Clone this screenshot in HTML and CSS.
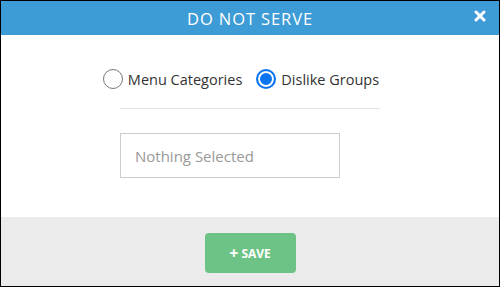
FILE: index.html
```html
<!DOCTYPE html>
<html lang="en">
<head>
    <meta charset="UTF-8">
    <title>Do Not Serve</title>
    <link rel="stylesheet" href="styles.css">
</head>
<body>
    <div class="modal">
        <div class="modal-header">
            <h2>Do Not Serve</h2>
            <span class="close-btn">
                <svg width="12" height="12" viewBox="0 0 12 12">
                    <path d="M2 2 L10 10 M10 2 L2 10" stroke="white" stroke-width="3" stroke-linecap="round"/>
                </svg>
            </span>
        </div>

        <div class="modal-body">
            <div class="radio-row">
                <label class="radio-option">
                    <input type="radio" name="source" value="menu"> Menu Categories
                </label>
                <label class="radio-option">
                    <input type="radio" name="source" value="dislike" checked> Dislike Groups
                </label>
            </div>
            <hr class="divider">
            <div class="select-box">Nothing Selected</div>
        </div>

        <div class="modal-footer">
            <button type="button" class="save-btn"><span class="plus">+</span> SAVE</button>
        </div>
    </div>
</body>
</html>
```

FILE: styles.css
```css
* {
    box-sizing: border-box;
}

body {
    margin: 0;
    font-family: 'Open Sans', sans-serif;
    background: white;
}

.modal {
    width: 500px;
    height: 287px;
    border: 1px solid #000;
    display: flex;
    flex-direction: column;
    background: white;
}

.modal-header {
    position: relative;
    height: 34px;
    background: #3d9bd6;
    display: flex;
    align-items: center;
    justify-content: center;
}

.modal-header h2 {
    margin: 0;
    color: white;
    font-size: 16.5px;
    font-weight: 400;
    letter-spacing: 0.9px;
    text-transform: uppercase;
}

.close-btn {
    position: absolute;
    right: 13px;
    top: 9px;
    display: flex;
}

.modal-body {
    flex: 1;
    padding-top: 34px;
    display: flex;
    flex-direction: column;
    align-items: center;
}

.radio-row {
    display: flex;
    gap: 14px;
    margin-right: 18px;
    font-size: 14.5px;
    color: #333;
}

.radio-option {
    display: flex;
    align-items: center;
    gap: 5px;
}

.radio-option input {
    appearance: none;
    width: 20px;
    height: 20px;
    margin: 0;
    border: 1.5px solid #767676;
    border-radius: 50%;
    background: white;
}

.radio-option input:checked {
    border: 2px solid #0b74f0;
    box-shadow: inset 0 0 0 2px white, inset 0 0 0 8px #0b74f0;
}

.divider {
    width: 260px;
    border: none;
    border-top: 1px solid #e3e3e3;
    margin: 19px 0 24px;
}

.select-box {
    width: 220px;
    height: 45px;
    margin-right: 40px;
    border: 1px solid #ccc;
    padding: 0 14px;
    display: flex;
    align-items: center;
    color: #999;
    font-size: 15px;
}

.modal-footer {
    height: 69px;
    background: #ebebeb;
    display: flex;
    justify-content: center;
    padding-top: 16px;
}

.save-btn {
    width: 91px;
    height: 40px;
    border: none;
    border-radius: 4px;
    background: #6cc385;
    color: white;
    font-family: 'Open Sans', sans-serif;
    font-size: 12px;
    font-weight: bold;
}

.save-btn .plus {
    font-size: 16px;
    vertical-align: -1px;
}
```
